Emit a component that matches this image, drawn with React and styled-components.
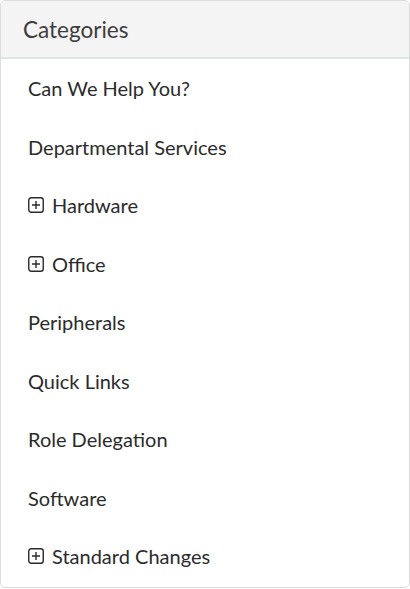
import React from 'react'
import styled, { createGlobalStyle } from 'styled-components'

const GlobalStyle = createGlobalStyle`
  body {
    margin: 0;
    background: #ffffff;
    font-family: "Lato", "Open Sans", sans-serif;
  }
`

const categories = [
  { name: 'Can We Help You?' },
  { name: 'Departmental Services' },
  { name: 'Hardware', expandable: true },
  { name: 'Office', expandable: true },
  { name: 'Peripherals' },
  { name: 'Quick Links' },
  { name: 'Role Delegation' },
  { name: 'Software' },
  { name: 'Standard Changes', expandable: true },
]

const PlusSquare = () => (
  <svg width="16" height="16" viewBox="0 0 16 16" fill="none">
    <rect x="0.75" y="0.75" width="14.5" height="14.5" rx="2.5" stroke="#2b2b2b" strokeWidth="1.4" />
    <path d="M8 4v8M4 8h8" stroke="#2b2b2b" strokeWidth="1.4" />
  </svg>
)

const App = () => {
  return (
    <Panel>
      <GlobalStyle />
      <Header>Categories</Header>
      <List>
        {categories.map((c) => (
          <Item key={c.name}>
            {c.expandable && <IconWrap><PlusSquare /></IconWrap>}
            <span>{c.name}</span>
          </Item>
        ))}
      </List>
    </Panel>
  )
}

export default App

const Panel = styled.div`
  width: 410px;
  height: 588px;
  box-sizing: border-box;
  border: 1px solid #dcdcdc;
  border-radius: 5px;
  overflow: hidden;
  background: #fff;
`

const Header = styled.div`
  height: 56px;
  display: flex;
  align-items: center;
  padding: 0 22px;
  background: #f4f4f4;
  border-bottom: 2px solid #dfe4e6;
  color: #3d3d3d;
  font-size: 22.5px;
`

const List = styled.ul`
  list-style: none;
  margin: 0;
  padding: 0;
`

const Item = styled.li`
  height: 58.5px;
  display: flex;
  align-items: center;
  gap: 8px;
  padding: 0 27px;
  color: #2b2b2b;
  font-size: 20px;
`

const IconWrap = styled.span`
  display: flex;
  align-items: center;
`
